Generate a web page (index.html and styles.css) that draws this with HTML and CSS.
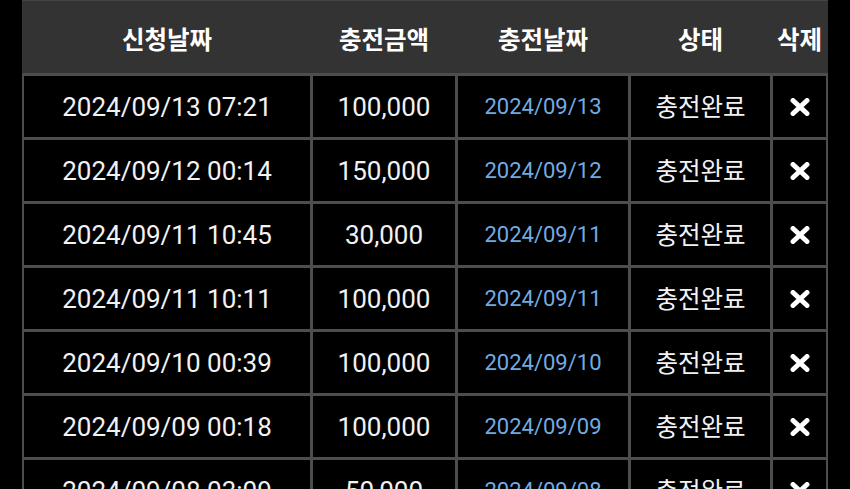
FILE: index.html
```html
<!DOCTYPE html>
<html lang="ko">
<head>
  <meta charset="UTF-8">
  <title>충전내역</title>
  <link rel="stylesheet" href="styles.css">
</head>
<body>

<div class="tabla">
  <div class="cabecera">
    <div>신청날짜</div>
    <div>충전금액</div>
    <div>충전날짜</div>
    <div>상태</div>
    <div>삭제</div>
  </div>

  <div class="cuerpo">
    <div class="fecha">2024/09/13 07:21</div>
    <div class="monto">100,000</div>
    <div class="azul">2024/09/13</div>
    <div class="estado">충전완료</div>
    <div class="borrar"><svg viewBox="0 0 20 18"><path d="M3 2.5L17 15.5M17 2.5L3 15.5"/></svg></div>

    <div class="fecha">2024/09/12 00:14</div>
    <div class="monto">150,000</div>
    <div class="azul">2024/09/12</div>
    <div class="estado">충전완료</div>
    <div class="borrar"><svg viewBox="0 0 20 18"><path d="M3 2.5L17 15.5M17 2.5L3 15.5"/></svg></div>

    <div class="fecha">2024/09/11 10:45</div>
    <div class="monto">30,000</div>
    <div class="azul">2024/09/11</div>
    <div class="estado">충전완료</div>
    <div class="borrar"><svg viewBox="0 0 20 18"><path d="M3 2.5L17 15.5M17 2.5L3 15.5"/></svg></div>

    <div class="fecha">2024/09/11 10:11</div>
    <div class="monto">100,000</div>
    <div class="azul">2024/09/11</div>
    <div class="estado">충전완료</div>
    <div class="borrar"><svg viewBox="0 0 20 18"><path d="M3 2.5L17 15.5M17 2.5L3 15.5"/></svg></div>

    <div class="fecha">2024/09/10 00:39</div>
    <div class="monto">100,000</div>
    <div class="azul">2024/09/10</div>
    <div class="estado">충전완료</div>
    <div class="borrar"><svg viewBox="0 0 20 18"><path d="M3 2.5L17 15.5M17 2.5L3 15.5"/></svg></div>

    <div class="fecha">2024/09/09 00:18</div>
    <div class="monto">100,000</div>
    <div class="azul">2024/09/09</div>
    <div class="estado">충전완료</div>
    <div class="borrar"><svg viewBox="0 0 20 18"><path d="M3 2.5L17 15.5M17 2.5L3 15.5"/></svg></div>

    <div class="fecha">2024/09/08 03:09</div>
    <div class="monto">50,000</div>
    <div class="azul">2024/09/08</div>
    <div class="estado">충전완료</div>
    <div class="borrar"><svg viewBox="0 0 20 18"><path d="M3 2.5L17 15.5M17 2.5L3 15.5"/></svg></div>
  </div>
</div>

</body>
</html>
```

FILE: styles.css
```css
body {
  margin: 0;
  background-color: #000;
  font-family: Roboto, "Noto Sans CJK KR", sans-serif;
  color: #f2f2f2;
  overflow: hidden;
}
.tabla {
  width: 806px;
  margin: 0 auto;
}
.cabecera,
.cuerpo {
  display: grid;
  grid-template-columns: 286px 142px 170px 139px 53px;
  column-gap: 3px;
}
.cabecera {
  height: 73px;
  background-color: #333;
  border-top: 1px solid #444;
  box-sizing: border-box;
  padding: 0 2px;
}
.cabecera div {
  display: flex;
  align-items: center;
  justify-content: center;
  padding-top: 2px;
  font-family: "Noto Sans CJK KR", sans-serif;
  font-size: 24.5px;
  font-weight: bold;
  color: #fff;
  white-space: nowrap;
}
.cuerpo {
  background-color: #4d4d4d;
  padding: 3px 2px 2px;
  row-gap: 3px;
  grid-auto-rows: 61px;
}
.cuerpo div {
  background-color: #000;
  display: flex;
  align-items: center;
  justify-content: center;
}
.fecha,
.monto {
  font-size: 26px;
}
.azul {
  font-size: 22px;
  color: #72abe0;
}
.estado {
  font-family: "Noto Sans CJK KR", sans-serif;
  font-size: 24.5px;
  padding-bottom: 3px;
}
.borrar svg {
  width: 20px;
  height: 18px;
}
.borrar path {
  stroke: #fff;
  stroke-width: 5;
  stroke-linecap: round;
  fill: none;
}
```
